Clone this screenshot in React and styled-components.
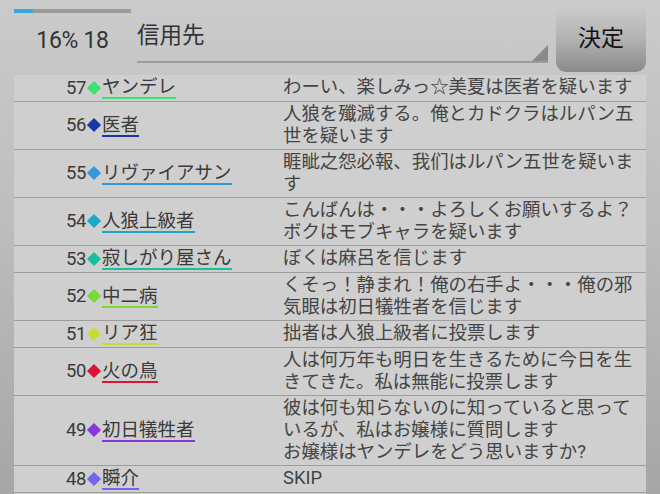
import styled, { createGlobalStyle } from 'styled-components';

const GlobalStyle = createGlobalStyle`
  html, body {
    margin: 0;
    padding: 0;
  }
  body {
    font-family: Roboto, "Noto Sans CJK JP", sans-serif;
  }
`

const Page = styled.div`
  width: 660px;
  height: 494px;
  overflow: hidden;
  background: linear-gradient(180deg, #cbcbcb 0%, #bdbdbd 45%, #a6a6a6 100%);
  display: flex;
  flex-direction: column;
`

const Header = styled.div`
  height: 75px;
  flex-shrink: 0;
  display: flex;
  padding: 0 14px;
  box-sizing: border-box;
`

const StatusBlock = styled.div`
  width: 117px;
  display: flex;
  flex-direction: column;
  align-items: center;
  padding-top: 9px;
`

const Progress = styled.div`
  width: 100%;
  height: 4px;
  background: #9a9a9a;
  div {
    height: 100%;
    background: #37a6dc;
    border-radius: 0 2px 2px 0;
  }
`

const Stats = styled.div`
  margin-top: 14px;
  font-size: 23px;
  color: #333;
  letter-spacing: -0.3px;
`

const Spinner = styled.div`
  margin-left: 6px;
  width: 411px;
  height: 63px;
  border-bottom: 2px solid #9c9c9c;
  box-sizing: border-box;
  position: relative;
  font-size: 22.5px;
  color: #333;
  padding-top: 17px;
  &::after {
    content: '';
    position: absolute;
    right: 0;
    bottom: 0;
    width: 0;
    height: 0;
    border-left: 16px solid transparent;
    border-bottom: 16px solid #8a8a8a;
  }
`

const DecideButton = styled.button`
  margin-left: 8px;
  margin-top: 3px;
  width: 90px;
  height: 69px;
  border: none;
  border-radius: 10px;
  background: linear-gradient(180deg, #cdcdcd 0%, #b4b4b4 50%, #8a8a8a 100%);
  font-family: Roboto, "Noto Sans CJK JP", sans-serif;
  font-size: 23px;
  color: #111;
  padding: 0 0 4px;
`

const List = styled.div`
  margin: 0 14px;
  background: #cfcfcf;
  flex: 1;
`

const Row = styled.div`
  display: grid;
  grid-template-columns: 269px 1fr;
  border-bottom: 1px solid #9d9d9d;
  padding: 1px 0 2px;
`

const Speaker = styled.div`
  display: flex;
  align-items: center;
  padding-left: 52px;
  font-size: 18.5px;
  color: #3a3a3a;
`

const Num = styled.span`
  width: 21px;
  letter-spacing: -0.4px;
`

const Diamond = styled.span`
  width: 10px;
  height: 10px;
  margin: 0 3px 0 2px;
  background: ${p => p.$c};
  transform: rotate(45deg);
`

const Name = styled.span`
  line-height: 19px;
  border-bottom: 2px solid ${p => p.$c};
  margin-top: 2px;
`

const Message = styled.div`
  font-size: 18.4px;
  line-height: 22px;
  color: #444;
  padding-right: 6px;
  white-space: pre-line;
`

const rows = [
  { n: 57, name: 'ヤンデレ', c: '#3ee06e', msg: 'わーい、楽しみっ☆美夏は医者を疑います' },
  { n: 56, name: '医者', c: '#1736a8', msg: '人狼を殲滅する。俺とカドクラはルパン五世を疑います' },
  { n: 55, name: 'リヴァイアサン', c: '#3497e0', msg: '睚眦之怨必報、我们はルパン五世を疑います' },
  { n: 54, name: '人狼上級者', c: '#1aa7c9', msg: 'こんばんは・・・よろしくお願いするよ？ボクはモブキャラを疑います' },
  { n: 53, name: '寂しがり屋さん', c: '#17bf9c', msg: 'ぼくは麻呂を信じます' },
  { n: 52, name: '中二病', c: '#78d934', msg: 'くそっ！静まれ！俺の右手よ・・・俺の邪気眼は初日犠牲者を信じます' },
  { n: 51, name: 'リア狂', c: '#c6dc36', msg: '拙者は人狼上級者に投票します' },
  { n: 50, name: '火の鳥', c: '#dc1536', msg: '人は何万年も明日を生きるために今日を生きてきた。私は無能に投票します' },
  { n: 49, name: '初日犠牲者', c: '#8a34dc', msg: '彼は何も知らないのに知っていると思っているが、私はお嬢様に質問します\nお嬢様はヤンデレをどう思いますか?' },
  { n: 48, name: '瞬介', c: '#7465ee', msg: 'SKIP' },
];

export default function App() {
  return (
    <Page>
      <GlobalStyle />
      <Header>
        <StatusBlock>
          <Progress><div style={{ width: '16%' }} /></Progress>
          <Stats>16% 18</Stats>
        </StatusBlock>
        <Spinner>信用先</Spinner>
        <DecideButton>決定</DecideButton>
      </Header>
      <List>
        {rows.map(r => (
          <Row key={r.n}>
            <Speaker>
              <Num>{r.n}</Num>
              <Diamond $c={r.c} />
              <Name $c={r.c}>{r.name}</Name>
            </Speaker>
            <Message>{r.msg}</Message>
          </Row>
        ))}
      </List>
    </Page>
  );
}
